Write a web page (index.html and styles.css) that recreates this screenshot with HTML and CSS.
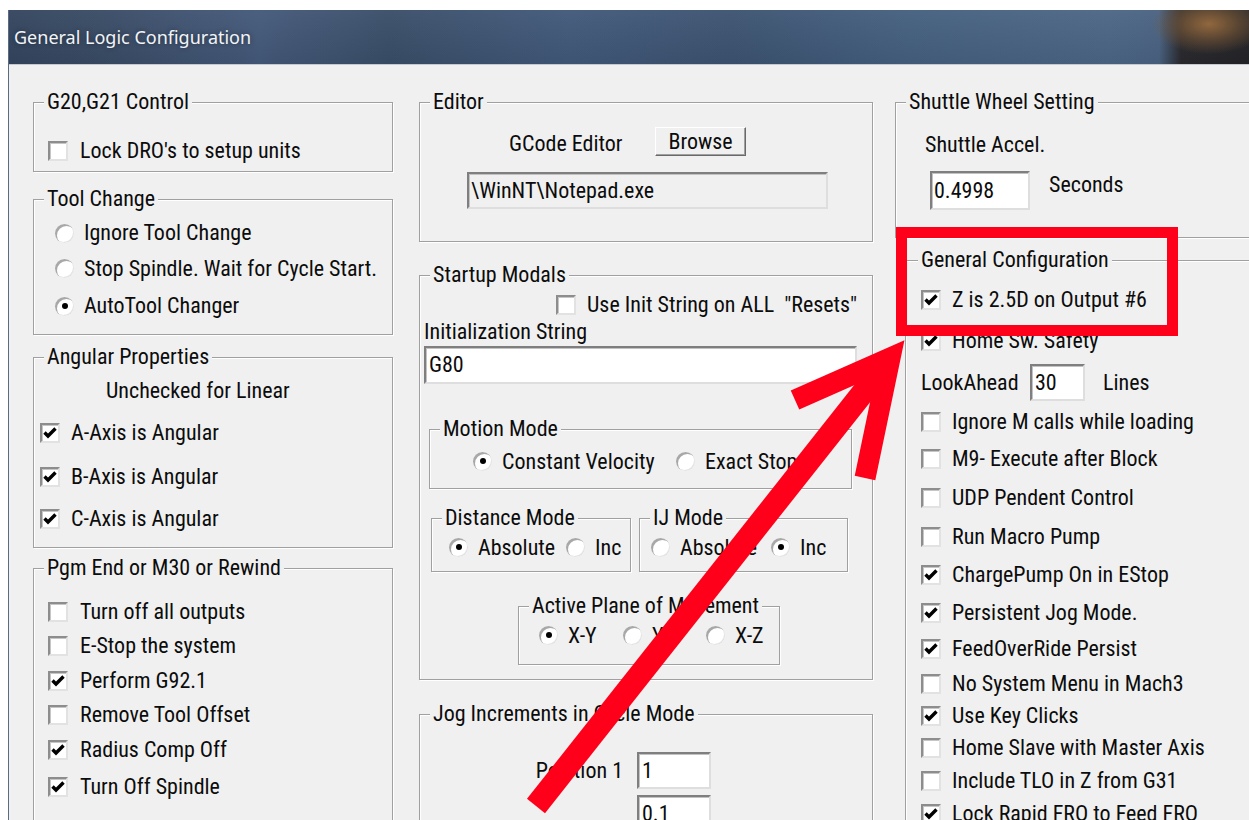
FILE: index.html
```html
<!DOCTYPE html>
<html>
<head>
<meta charset="utf-8">
<title>General Logic Configuration</title>
<link rel="stylesheet" href="styles.css">
</head>
<body>
<div class="window">
  <div class="titlebar"><span class="title">General Logic Configuration</span></div>
  <div class="client">

    <!-- left column -->
    <div class="col col-left">
      <div class="group g-units">
        <div class="cap">G20,G21 Control</div>
        <div class="rows">
          <div class="row"><span class="chk"></span><span class="lbl">Lock DRO's to setup units</span></div>
        </div>
      </div>

      <div class="group g-tool">
        <div class="cap">Tool Change</div>
        <div class="rows">
          <div class="row"><span class="radio"></span><span class="lbl">Ignore Tool Change</span></div>
          <div class="row"><span class="radio"></span><span class="lbl">Stop Spindle. Wait for Cycle Start.</span></div>
          <div class="row"><span class="radio on"></span><span class="lbl">AutoTool Changer</span></div>
        </div>
      </div>

      <div class="group g-angular">
        <div class="cap">Angular Properties</div>
        <div class="rows">
          <div class="row note">Unchecked for Linear</div>
          <div class="row"><span class="chk"><svg viewBox="0 0 16 16"><polyline points="2.5,7.5 6,11 13.5,3.5"/></svg></span><span class="lbl">A-Axis is Angular</span></div>
          <div class="row"><span class="chk"><svg viewBox="0 0 16 16"><polyline points="2.5,7.5 6,11 13.5,3.5"/></svg></span><span class="lbl">B-Axis is Angular</span></div>
          <div class="row"><span class="chk"><svg viewBox="0 0 16 16"><polyline points="2.5,7.5 6,11 13.5,3.5"/></svg></span><span class="lbl">C-Axis is Angular</span></div>
        </div>
      </div>

      <div class="group g-pgmend">
        <div class="cap">Pgm End or M30 or Rewind</div>
        <div class="rows">
          <div class="row"><span class="chk"></span><span class="lbl">Turn off all outputs</span></div>
          <div class="row"><span class="chk"></span><span class="lbl">E-Stop the system</span></div>
          <div class="row"><span class="chk"><svg viewBox="0 0 16 16"><polyline points="2.5,7.5 6,11 13.5,3.5"/></svg></span><span class="lbl">Perform G92.1</span></div>
          <div class="row"><span class="chk"></span><span class="lbl">Remove Tool Offset</span></div>
          <div class="row"><span class="chk"><svg viewBox="0 0 16 16"><polyline points="2.5,7.5 6,11 13.5,3.5"/></svg></span><span class="lbl">Radius Comp Off</span></div>
          <div class="row"><span class="chk"><svg viewBox="0 0 16 16"><polyline points="2.5,7.5 6,11 13.5,3.5"/></svg></span><span class="lbl">Turn Off Spindle</span></div>
        </div>
      </div>
    </div>

    <!-- middle column -->
    <div class="col col-mid">
      <div class="group g-editor">
        <div class="cap">Editor</div>
        <div class="editor-line">
          <span class="editor-lbl">GCode Editor</span>
          <span class="btn">Browse</span>
        </div>
        <div class="field ro editor-path">\WinNT\Notepad.exe</div>
      </div>

      <div class="group g-startup">
        <div class="cap">Startup Modals</div>
        <div class="row init-check"><span class="chk"></span><span class="lbl">Use Init String on ALL&nbsp; "Resets"</span></div>
        <div class="init-lbl">Initialization String</div>
        <div class="field init-field">G80</div>

        <div class="group g-motion">
          <div class="cap">Motion Mode</div>
          <div class="opts">
            <div class="opt w-cv"><span class="radio on"></span><span class="lbl">Constant Velocity</span></div>
            <div class="opt"><span class="radio"></span><span class="lbl">Exact Stop</span></div>
          </div>
        </div>

        <div class="pair">
          <div class="group g-dist">
            <div class="cap">Distance Mode</div>
            <div class="opts">
              <div class="opt w-abs"><span class="radio on"></span><span class="lbl">Absolute</span></div>
              <div class="opt"><span class="radio"></span><span class="lbl">Inc</span></div>
            </div>
          </div>
          <div class="group g-ij">
            <div class="cap">IJ Mode</div>
            <div class="opts">
              <div class="opt w-ijabs"><span class="radio"></span><span class="lbl">Absolute</span></div>
              <div class="opt"><span class="radio on"></span><span class="lbl">Inc</span></div>
            </div>
          </div>
        </div>

        <div class="group g-plane">
          <div class="cap">Active Plane of Movement</div>
          <div class="opts">
            <div class="opt w-xy"><span class="radio on"></span><span class="lbl">X-Y</span></div>
            <div class="opt w-yz"><span class="radio"></span><span class="lbl">Y-Z</span></div>
            <div class="opt"><span class="radio"></span><span class="lbl">X-Z</span></div>
          </div>
        </div>
      </div>

      <div class="group g-jog">
        <div class="cap">Jog Increments in Cycle Mode</div>
        <div class="jog-grid">
          <span class="jog-lbl">Position 1</span><span class="field">1</span>
          <span class="jog-lbl"></span><span class="field">0.1</span>
        </div>
      </div>
    </div>

    <!-- right column -->
    <div class="col col-right">
      <div class="group g-shuttle">
        <div class="cap">Shuttle Wheel Setting</div>
        <div class="shuttle-lbl">Shuttle Accel.</div>
        <div class="shuttle-line">
          <span class="field accel">0.4998</span>
          <span class="secs">Seconds</span>
        </div>
      </div>

      <div class="group g-general">
        <div class="cap">General Configuration</div>
        <div class="rows">
          <div class="row"><span class="chk"><svg viewBox="0 0 16 16"><polyline points="2.5,7.5 6,11 13.5,3.5"/></svg></span><span class="lbl">Z is 2.5D on Output #6</span></div>
          <div class="row"><span class="chk"><svg viewBox="0 0 16 16"><polyline points="2.5,7.5 6,11 13.5,3.5"/></svg></span><span class="lbl">Home Sw. Safety</span></div>
          <div class="row lookahead"><span class="la-lbl">LookAhead</span><span class="field la-field">30</span><span class="la-unit">Lines</span></div>
          <div class="row"><span class="chk"></span><span class="lbl">Ignore M calls while loading</span></div>
          <div class="row"><span class="chk"></span><span class="lbl">M9- Execute after Block</span></div>
          <div class="row"><span class="chk"></span><span class="lbl">UDP Pendent Control</span></div>
          <div class="row"><span class="chk"></span><span class="lbl">Run Macro Pump</span></div>
          <div class="row"><span class="chk"><svg viewBox="0 0 16 16"><polyline points="2.5,7.5 6,11 13.5,3.5"/></svg></span><span class="lbl">ChargePump On in EStop</span></div>
          <div class="row"><span class="chk"><svg viewBox="0 0 16 16"><polyline points="2.5,7.5 6,11 13.5,3.5"/></svg></span><span class="lbl">Persistent Jog Mode.</span></div>
          <div class="row"><span class="chk"><svg viewBox="0 0 16 16"><polyline points="2.5,7.5 6,11 13.5,3.5"/></svg></span><span class="lbl">FeedOverRide Persist</span></div>
          <div class="row"><span class="chk"></span><span class="lbl">No System Menu in Mach3</span></div>
          <div class="row"><span class="chk"><svg viewBox="0 0 16 16"><polyline points="2.5,7.5 6,11 13.5,3.5"/></svg></span><span class="lbl">Use Key Clicks</span></div>
          <div class="row"><span class="chk"></span><span class="lbl">Home Slave with Master Axis</span></div>
          <div class="row"><span class="chk"></span><span class="lbl">Include TLO in Z from G31</span></div>
          <div class="row"><span class="chk"><svg viewBox="0 0 16 16"><polyline points="2.5,7.5 6,11 13.5,3.5"/></svg></span><span class="lbl">Lock Rapid FRO to Feed FRO</span></div>
        </div>
      </div>
    </div>

  </div>
</div>

<!-- red call-out drawn over the dialog -->
<svg class="annot" width="1249" height="820" viewBox="0 0 1249 820">
  <rect x="901.5" y="232.5" width="271" height="98" fill="none" stroke="#fe0019" stroke-width="11"/>
  <line x1="536" y1="806" x2="884" y2="366" stroke="#fe0019" stroke-width="23"/>
  <polyline points="795,400 890,358 865,478" fill="none" stroke="#fe0019" stroke-width="21" stroke-linejoin="miter"/>
</svg>
</body>
</html>
```
FILE: styles.css
```css
* { box-sizing: border-box; }

html, body { margin: 0; }

body {
  width: 1249px;
  height: 820px;
  overflow: hidden;
  position: relative;
  background: #fff;
  font-family: Roboto, "Liberation Sans", Arial, sans-serif;
  font-stretch: condensed;
  font-size: 22px;
  color: #0c0c0c;
}

/* window frame */
.window {
  margin: 10px 0 0 8px;
  width: 1300px;
  height: 900px;
  border-left: 1px solid #5a6c84;
  background: #f0f0f0;
}

.titlebar {
  height: 54px;
  display: flex;
  align-items: center;
  padding-left: 5px;
  background:
    radial-gradient(58px 30px at 1200px 14px, rgba(150,106,62,.95), rgba(120,86,52,.55) 55%, rgba(60,50,45,0) 100%),
    linear-gradient(to bottom, rgba(255,255,255,.04), rgba(0,0,0,.06)),
    linear-gradient(to right, #33455e 0px, #394b65 90px, #44597a 250px, #3a4e69 380px, #41597a 560px,
      #3c5371 720px, #44607f 900px, #4b6685 1100px, #4a6382 1150px, #2a2a2e 1172px, #1d1e22 1300px);
}

.title {
  font-family: "Noto Sans", "Open Sans", sans-serif;
  font-stretch: normal;
  font-size: 18px;
  color: #f1f4f8;
  text-shadow: 0 0 5px rgba(0,0,0,.45);
}

.client {
  border-top: 1px solid #c6cad0;
  display: flex;
  align-items: flex-start;
  padding: 37px 0 0 24px;
}

.col { flex: none; display: flex; flex-direction: column; }
.col-left { width: 360px; margin-right: 26px; }
.col-mid { width: 454px; margin-right: 22px; }
.col-right { width: 430px; }

/* etched group box */
.group {
  border: 1px solid #a0a0a0;
  box-shadow: 1px 1px 0 #fff, inset 1px 1px 0 #fff;
  flex: none;
}

.cap {
  width: fit-content;
  height: 24px;
  line-height: 24px;
  margin: -13px 0 0 10px;
  padding: 0 3px;
  background: #f0f0f0;
  white-space: nowrap;
}

.row {
  display: flex;
  align-items: center;
  height: 24px;
  line-height: 24px;
  white-space: nowrap;
}

/* checkbox */
.chk {
  flex: none;
  width: 20px;
  height: 20px;
  background: #fff;
  border: 2px solid;
  border-color: #8d8d8d #e2e2e2 #e2e2e2 #8d8d8d;
  box-shadow: inset 1px 1px 0 #c6c6c6;
  display: flex;
  align-items: center;
  justify-content: center;
}
.chk svg { width: 16px; height: 16px; }
.chk polyline { fill: none; stroke: #000; stroke-width: 3.4; stroke-linejoin: miter; }

/* radio button */
.radio {
  flex: none;
  width: 19px;
  height: 19px;
  border-radius: 50%;
  background: #fff;
  box-shadow: inset 2px 2px 0 #a8a8a8, inset -1px -1px 0 #e2e2e2;
  display: flex;
  align-items: center;
  justify-content: center;
}
.radio.on::after {
  content: "";
  width: 6px;
  height: 6px;
  border-radius: 50%;
  background: #000;
}

/* sunken text field */
.field {
  display: flex;
  align-items: center;
  background: #fff;
  border: 2px solid;
  border-color: #7f7f7f #dedede #dedede #7f7f7f;
  box-shadow: inset 1px 1px 0 #c2c2c2;
  padding-left: 2px;
  line-height: 24px;
  white-space: nowrap;
}
.field.ro { background: #f0f0f0; }

.btn {
  width: 91px;
  height: 29px;
  display: flex;
  align-items: center;
  justify-content: center;
  background: #f0f0f0;
  border: 1px solid;
  border-color: #fff #696969 #696969 #fff;
  box-shadow: inset -1px -1px 0 #a0a0a0;
}

/* left column groups */
.g-units { height: 70px; margin-bottom: 27px; }
.g-units .rows { padding: 25px 0 0 14px; }
.g-units .chk { margin-right: 12px; }

.g-tool { height: 136px; margin-bottom: 22px; }
.g-tool .rows { display: grid; grid-template-rows: 34px 37px 38px; align-items: center; padding: 5px 0 0 21px; }
.g-tool .radio { margin-right: 10px; }

.g-angular { height: 191px; margin-bottom: 20px; }
.g-angular .rows { display: grid; grid-template-rows: 40px 44px 44px 40px; align-items: center; padding: 2px 0 0 6px; }
.g-angular .note { padding-left: 66px; }
.g-angular .chk { margin-right: 11px; }

.g-pgmend { height: 300px; }
.g-pgmend .rows { display: grid; grid-template-rows: 34px 34px 35px 34px 36px 38px; align-items: center; padding: 15px 0 0 14px; }
.g-pgmend .chk { margin-right: 12px; }

/* middle column groups */
.g-editor { height: 140px; margin-bottom: 33px; }
.editor-line { display: flex; align-items: center; margin: 13px 0 0 89px; height: 29px; }
.editor-lbl { width: 146px; position: relative; top: 2px; }
.editor-path { width: 361px; height: 37px; margin: 16px 0 0 47px; }

.g-startup { height: 405px; margin-bottom: 34px; }
.init-check { margin: 6px 0 0 136px; }
.init-check .chk { margin-right: 11px; }
.init-lbl { margin: 3px 0 0 4px; height: 24px; line-height: 24px; }
.init-field { width: 433px; height: 38px; margin: 2px 0 0 4px; padding-left: 3px; }

.opts { display: flex; align-items: center; height: 24px; white-space: nowrap; }
.opt { display: flex; align-items: center; flex: none; }
.opt .radio { margin-right: 10px; }

.g-motion { width: 423px; height: 60px; margin: 45px 0 0 9px; }
.g-motion .opts { margin: 8px 0 0 43px; }
.w-cv { width: 203px; }

.pair { display: flex; gap: 8px; margin: 29px 0 0 11px; }
.g-dist { width: 200px; height: 54px; }
.g-dist .opts { margin: 5px 0 0 17px; }
.w-abs { width: 117px; }
.g-ij { width: 209px; height: 54px; }
.g-ij .opts { margin: 5px 0 0 11px; }
.w-ijabs { width: 120px; }

.g-plane { width: 262px; height: 59px; margin: 34px 0 0 98px; }
.g-plane .opts { margin: 5px 0 0 20px; }
.w-xy { width: 84px; }
.w-yz { width: 83px; }

.g-jog { height: 200px; }
.jog-grid {
  display: grid;
  grid-template-columns: 203px 74px;
  grid-auto-rows: 37px;
  column-gap: 14px;
  row-gap: 6px;
  margin-top: 26px;
  align-items: center;
}
.jog-lbl { text-align: right; line-height: 24px; }
.jog-grid .field { height: 37px; padding-left: 3px; }

/* right column groups */
.g-shuttle { height: 136px; }
.shuttle-lbl { margin: 19px 0 0 29px; height: 24px; line-height: 24px; }
.shuttle-line { display: flex; align-items: flex-start; margin: 14px 0 0 34px; }
.accel { width: 100px; height: 39px; padding-left: 2px; }
.secs { margin: 2px 0 0 19px; line-height: 24px; }

.g-general { height: 620px; margin: 22px 0 0 10px; }
.g-general .cap { margin-left: 12px; }
.g-general .rows {
  display: grid;
  grid-template-rows: 38px 43px 41px 37px 38px 39px 39px 38px 37px 36px 33px 32px 32px 33px 34px;
  align-items: center;
  padding: 9px 0 0 15px;
}
.g-general .chk { margin-right: 11px; }
.la-lbl { width: 109px; }
.la-field { width: 55px; height: 37px; padding-left: 3px; }
.la-unit { margin-left: 18px; }

/* call-out overlay */
.annot {
  position: absolute;
  left: 0;
  top: 0;
  pointer-events: none;
}
```
